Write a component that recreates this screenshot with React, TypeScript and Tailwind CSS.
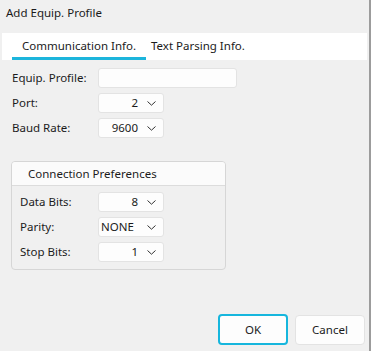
import type { ReactNode } from "react";

const font = { fontFamily: '"Noto Sans", "Open Sans", sans-serif' };

function Chevron() {
  return (
    <svg width="9" height="5" viewBox="0 0 9 5" className="shrink-0">
      <polyline points="0.5,0.5 4.5,4.2 8.5,0.5" fill="none" stroke="#333" strokeWidth="1" />
    </svg>
  );
}

function Select({ value, left }: { value: string; left?: boolean }) {
  return (
    <div className="flex items-center w-[66px] h-[20px] bg-[#fdfdfd] border border-[#e3e3e3] rounded-[3px]">
      <div className={left ? "w-[39px] pl-[2px] text-left whitespace-nowrap" : "w-[39px] text-right"}>{value}</div>
      <div className="ml-[9px] flex items-center">
        <Chevron />
      </div>
    </div>
  );
}

function Row({ label, labelW, children }: { label: string; labelW: string; children: ReactNode }) {
  return (
    <div className="flex items-center h-[20px]">
      <div className={labelW}>{label}</div>
      {children}
    </div>
  );
}

export default function App() {
  return (
    <div
      style={font}
      className="w-[371px] h-[351px] bg-[#f0f0f0] border-r-2 border-[#9c9c9c] flex flex-col text-[11.5px] text-[#1b1b1b] overflow-hidden"
    >
      <div className="pl-[6px] pt-[4px] leading-[18px]">Add Equip. Profile</div>

      {/* tabs */}
      <div className="mt-[11px] ml-[2px] w-[365px] h-[27px] bg-white flex items-stretch">
        <div className="ml-[10px] w-[134px] flex items-center justify-center pt-[1px] border-b-[3px] border-[#1cb5dc]">
          Communication Info.
        </div>
        <div className="ml-[5px] flex items-center pb-[1px]">Text Parsing Info.</div>
      </div>

      <div className="pl-[12px] mt-[8px] flex flex-col gap-[5px]">
        <Row label="Equip. Profile:" labelW="w-[86px]">
          <div className="w-[139px] h-[20px] bg-[#fdfdfd] border border-[#e3e3e3] rounded-[3px]" />
        </Row>
        <Row label="Port:" labelW="w-[86px]">
          <Select value="2" />
        </Row>
        <Row label="Baud Rate:" labelW="w-[86px]">
          <Select value="9600" />
        </Row>
      </div>

      {/* group box */}
      <div className="ml-[11px] mt-[23px] w-[215px] h-[109px] border border-[#d6d6d6] rounded-[4px] flex flex-col overflow-hidden">
        <div className="h-[24px] bg-[#fbfbfb] border-b border-[#dcdcdc] pl-[16px] flex items-center">
          Connection Preferences
        </div>
        <div className="pl-[8px] pt-[6px] flex flex-col gap-[5px]">
          <Row label="Data Bits:" labelW="w-[78px]">
            <Select value="8" />
          </Row>
          <Row label="Parity:" labelW="w-[78px]">
            <Select value="NONE" left />
          </Row>
          <Row label="Stop Bits:" labelW="w-[78px]">
            <Select value="1" />
          </Row>
        </div>
      </div>

      <div className="mt-auto pb-[6px] pr-[4px] flex justify-end gap-[7px]">
        <button
          type="button"
          className="w-[70px] h-[31px] bg-[#fdfdfd] border-2 border-[#16b6dd] rounded-[4px]"
        >
          OK
        </button>
        <button
          type="button"
          className="w-[70px] h-[30px] mt-[1px] bg-[#fdfdfd] border border-[#e3e3e3] rounded-[4px]"
        >
          Cancel
        </button>
      </div>
    </div>
  );
}
